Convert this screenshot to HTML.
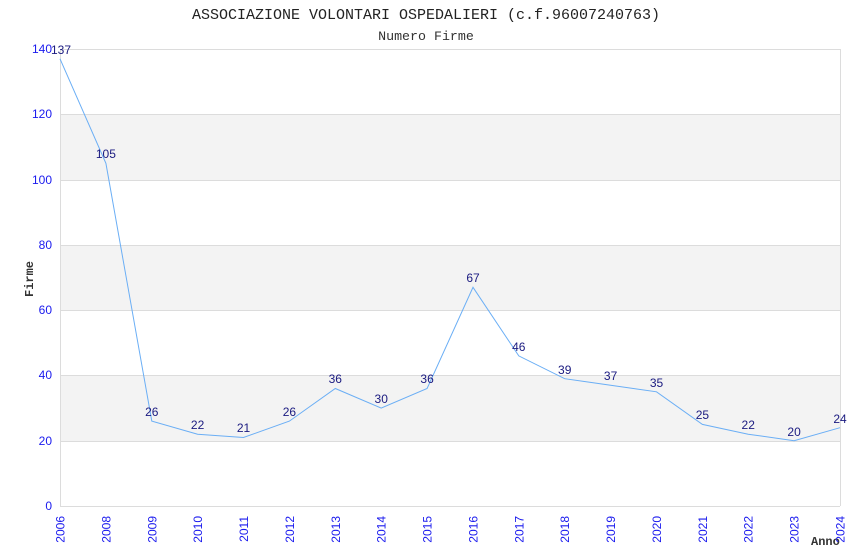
<!DOCTYPE html>
<html><head><meta charset="utf-8"><style>
html,body{margin:0;padding:0;background:#fff;}
svg{display:block;}
</style></head><body>
<svg width="850" height="550" xmlns="http://www.w3.org/2000/svg">
<rect width="850" height="550" fill="#fff"/>
<text x="426" y="19" font-family="Liberation Mono, monospace" font-size="15" fill="#222" text-anchor="middle">ASSOCIAZIONE VOLONTARI OSPEDALIERI (c.f.96007240763)</text>
<text x="426" y="40" font-family="Liberation Mono, monospace" font-size="13.3" fill="#333" text-anchor="middle">Numero Firme</text>
<g fill="#f3f3f3">
<rect x="60" y="114" width="780" height="66"/>
<rect x="60" y="245" width="780" height="65"/>
<rect x="60" y="375" width="780" height="66"/>
</g>
<g stroke="#dcdcdc" stroke-width="1">
<line x1="60" y1="49.5" x2="840" y2="49.5"/>
<line x1="60" y1="114.5" x2="840" y2="114.5"/>
<line x1="60" y1="180.5" x2="840" y2="180.5"/>
<line x1="60" y1="245.5" x2="840" y2="245.5"/>
<line x1="60" y1="310.5" x2="840" y2="310.5"/>
<line x1="60" y1="375.5" x2="840" y2="375.5"/>
<line x1="60" y1="441.5" x2="840" y2="441.5"/>
<line x1="60" y1="506.5" x2="840" y2="506.5"/>
<line x1="60.5" y1="49" x2="60.5" y2="506"/>
<line x1="840.5" y1="49" x2="840.5" y2="506"/>
</g>
<g font-family="Liberation Sans, sans-serif" font-size="12" fill="#1a1aee" text-anchor="end">
<text x="52" y="53">140</text><text x="52" y="118">120</text><text x="52" y="184">100</text>
<text x="52" y="249">80</text><text x="52" y="314">60</text><text x="52" y="379">40</text>
<text x="52" y="445">20</text><text x="52" y="510">0</text>
</g>
<text transform="translate(33,279) rotate(-90)" font-family="Liberation Mono, monospace" font-size="12" font-weight="bold" fill="#333" text-anchor="middle">Firme</text>
<text x="811" y="545" font-family="Liberation Mono, monospace" font-size="12" font-weight="bold" fill="#333">Anno</text>
<polyline fill="none" stroke="#6aaef5" stroke-width="1" points="60,58.8 105.9,163.3 151.8,421.1 197.6,434.2 243.5,437.5 289.4,421.1 335.3,388.5 381.2,408.1 427.1,388.5 473,287.3 518.8,355.9 564.7,378.7 610.6,385.2 656.5,391.8 702.4,424.4 748.2,434.2 794.1,440.7 840,427.7"/>
<g font-family="Liberation Sans, sans-serif" font-size="12" fill="#1a1a80" text-anchor="middle">
<text x="61" y="54">137</text><text x="105.9" y="158">105</text><text x="151.8" y="416">26</text>
<text x="197.6" y="429">22</text><text x="243.5" y="432">21</text><text x="289.4" y="416">26</text>
<text x="335.3" y="383">36</text><text x="381.2" y="403">30</text><text x="427.1" y="383">36</text>
<text x="473" y="282">67</text><text x="518.8" y="351">46</text><text x="564.7" y="374">39</text>
<text x="610.6" y="380">37</text><text x="656.5" y="387">35</text><text x="702.4" y="419">25</text>
<text x="748.2" y="429">22</text><text x="794.1" y="436">20</text><text x="840" y="423">24</text>
</g>
<g font-family="Liberation Sans, sans-serif" font-size="12" fill="#1a1aee" text-anchor="end">
<text transform="translate(64.5,516) rotate(-90)">2006</text>
<text transform="translate(110.4,516) rotate(-90)">2008</text>
<text transform="translate(156.3,516) rotate(-90)">2009</text>
<text transform="translate(202.1,516) rotate(-90)">2010</text>
<text transform="translate(248,516) rotate(-90)">2011</text>
<text transform="translate(293.9,516) rotate(-90)">2012</text>
<text transform="translate(339.8,516) rotate(-90)">2013</text>
<text transform="translate(385.7,516) rotate(-90)">2014</text>
<text transform="translate(431.6,516) rotate(-90)">2015</text>
<text transform="translate(477.5,516) rotate(-90)">2016</text>
<text transform="translate(523.3,516) rotate(-90)">2017</text>
<text transform="translate(569.2,516) rotate(-90)">2018</text>
<text transform="translate(615.1,516) rotate(-90)">2019</text>
<text transform="translate(661,516) rotate(-90)">2020</text>
<text transform="translate(706.9,516) rotate(-90)">2021</text>
<text transform="translate(752.7,516) rotate(-90)">2022</text>
<text transform="translate(798.6,516) rotate(-90)">2023</text>
<text transform="translate(844.5,516) rotate(-90)">2024</text>
</g>
</svg>
</body></html>
